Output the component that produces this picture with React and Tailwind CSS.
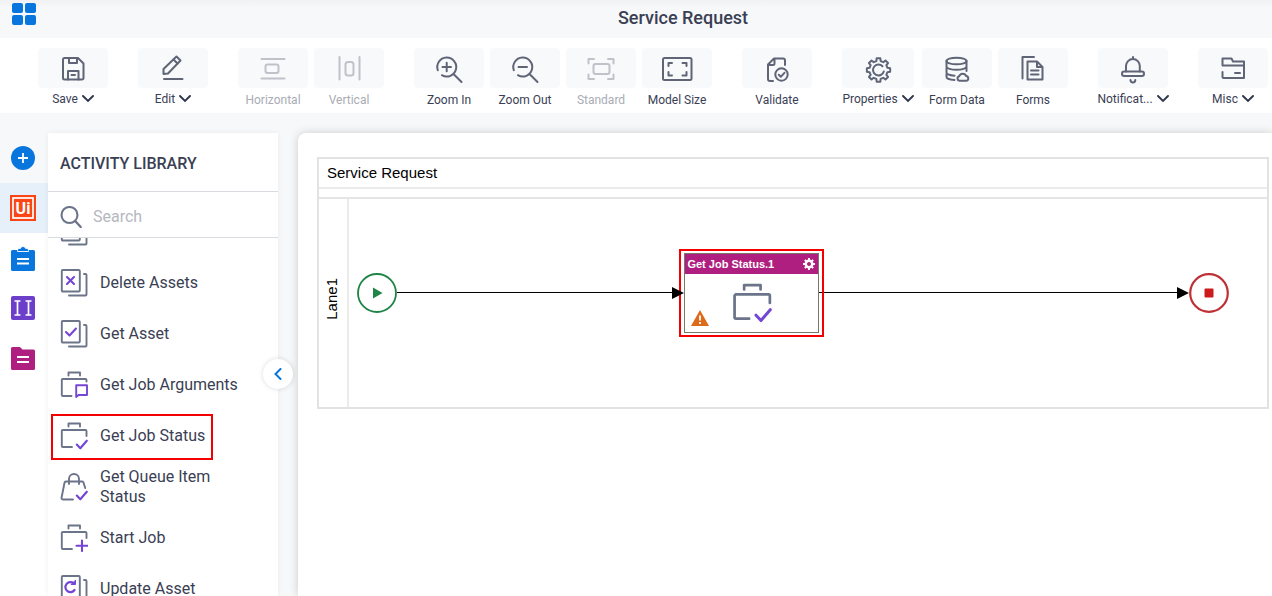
const Icon = ({ children, className = 'size-8' }) => (
  <svg
    viewBox="0 0 32 32"
    fill="none"
    stroke="currentColor"
    strokeWidth="2"
    strokeLinecap="round"
    strokeLinejoin="round"
    className={className}
    aria-hidden="true"
  >
    {children}
  </svg>
);

const gearPath = (cx, cy, outer, inner, teeth) => {
  const points = [];
  const step = (Math.PI * 2) / teeth;
  for (let i = 0; i < teeth; i++) {
    [
      [-0.3, inner],
      [-0.2, outer],
      [0.2, outer],
      [0.3, inner],
    ].forEach(([offset, r]) => {
      const angle = (i + offset) * step;
      points.push(
        `${(cx + r * Math.cos(angle)).toFixed(2)} ${(cy + r * Math.sin(angle)).toFixed(2)}`
      );
    });
  }
  return `M${points.join('L')}Z`;
};

const icons = {
  save: (
    <>
      <path d="M7.5 6H21l5.5 5.5V26a1.5 1.5 0 0 1-1.5 1.5H7.5A1.5 1.5 0 0 1 6 26V7.5A1.5 1.5 0 0 1 7.5 6z" />
      <path d="M12 6v5h8V6M11 27.5V19h10.5v8.5M14.5 23h3.5" />
    </>
  ),
  edit: (
    <>
      <path d="M6.5 22v-5L19.5 4.5l4 4L11 21.5z" />
      <path d="M16.5 7.5l4 4M7 27h18.5" />
    </>
  ),
  horizontal: (
    <>
      <path d="M4.5 7h23M4.5 26.5h23" />
      <rect x="8.5" y="12.5" width="13" height="8.5" rx="2" />
    </>
  ),
  vertical: (
    <>
      <path d="M6.5 5v22.5M26.5 5v22.5" />
      <rect x="12.5" y="10" width="8" height="13.5" rx="2.5" />
    </>
  ),
  zoomIn: (
    <path d="M4.8 18.2A9.5 9.5 0 1 1 8.9 23.2M20.5 22l8 8M9.5 15h8.5M13.7 10.8v8.5" />
  ),
  zoomOut: (
    <path d="M4.8 18.2A9.5 9.5 0 1 1 8.9 23.2M20.5 22l8 8M9.5 15h8.5" />
  ),
  standard: (
    <>
      <path d="M3.5 11.5V7H9M23 7h5.5v4.5M28.5 22.5V27H23M9 27H3.5v-4.5" />
      <rect x="8.5" y="12" width="16" height="10" rx="2" />
    </>
  ),
  modelSize: (
    <>
      <rect x="2" y="6" width="28.5" height="22" rx="1.5" />
      <path d="M7.5 14v-3H11M21.5 11h4v3M25.5 20v3.5h-4M11 23.5H7.5V20" />
    </>
  ),
  validate: (
    <>
      <path d="M12 29H9a2 2 0 0 1-2-2V12.5L13 6.5h9a2 2 0 0 1 2 2V13M7.5 13H12a1.5 1.5 0 0 0 1.5-1.5V7" />
      <circle cx="20.5" cy="22.5" r="6.2" />
      <path d="M17.8 22.8l2 2 3.6-4" />
    </>
  ),
  properties: (
    <>
      <path d={gearPath(16.5, 18, 11.8, 9.2, 8)} />
      <path d="M20.5 14.2a5.5 5.5 0 1 0 1.3 5.3M16.5 12.5a5.5 5.5 0 0 1 2.5 .6" />
    </>
  ),
  formData: (
    <>
      <ellipse cx="15.5" cy="9" rx="10" ry="3.3" />
      <path d="M5.5 9v5.5c0 1.8 4.5 3.3 10 3.3s10-1.5 10-3.3V9M5.5 16v4.5c0 1.5 3.5 2.8 8 3.2M25.5 15v4M5.5 22v3c0 1.4 3.5 2.7 8 3" />
      <path d="M18.5 28.8a2.3 2.3 0 0 1-.3-4.5 3.7 3.7 0 0 1 7-.2 2.4 2.4 0 0 1 .3 4.7z" />
    </>
  ),
  forms: (
    <>
      <path d="M5.5 26.5V5H17" />
      <path d="M10.5 9.5H20l5.5 5.5v12.5h-15zM20 9.5V15h5.5M14 18.5h7.5M14 22.5h7.5" />
    </>
  ),
  bell: (
    <>
      <path d="M9 19.5V14a6.9 6.9 0 0 1 13.8 0v5.5M16 7V5" />
      <rect x="5" y="19.5" width="22" height="4.5" rx="2.2" />
      <path d="M13.5 28a2.4 2.4 0 0 0 4.8 0" />
    </>
  ),
  misc: (
    <>
      <path d="M5.5 13.5v-7h9l1.5 3h11V26H6.5a1 1 0 0 1-1-1v-5M5.5 13.5H27" />
      <path d="M18 21h5" />
    </>
  ),
};

const toolbarGroups = [
  [{ label: 'Save', icon: 'save', menu: true }],
  [{ label: 'Edit', icon: 'edit', menu: true }],
  [
    { label: 'Horizontal', icon: 'horizontal', disabled: true },
    { label: 'Vertical', icon: 'vertical', disabled: true },
  ],
  [
    { label: 'Zoom In', icon: 'zoomIn' },
    { label: 'Zoom Out', icon: 'zoomOut' },
    { label: 'Standard', icon: 'standard', disabled: true },
    { label: 'Model Size', icon: 'modelSize' },
  ],
  [{ label: 'Validate', icon: 'validate' }],
  [
    { label: 'Properties', icon: 'properties', menu: true, wide: true },
    { label: 'Form Data', icon: 'formData' },
    { label: 'Forms', icon: 'forms' },
  ],
  [{ label: 'Notificat...', icon: 'bell', menu: true }],
  [{ label: 'Misc', icon: 'misc', menu: true }],
];

const ToolbarButton = ({ label, icon, menu, disabled, wide }) => (
  <button
    type="button"
    disabled={disabled}
    className={`flex shrink-0 flex-col items-center ${wide ? 'mr-0.5 w-[72px]' : 'w-[70px]'} ${
      disabled ? 'text-[#bfc2c9]' : 'text-[#5f6577]'
    }`}
  >
    <span className="flex h-10 w-full items-center justify-center rounded bg-[#f8f9fb]">
      <Icon>{icons[icon]}</Icon>
    </span>
    <span
      className={`flex items-center gap-1 text-xs whitespace-nowrap ${
        menu ? 'mt-[3px]' : 'mt-1'
      } ${disabled ? 'text-[#a9acb4]' : 'text-[#3a4054]'}`}
    >
      {label}
      {menu && (
        <svg viewBox="0 0 12 8" className="h-2 w-3" fill="none" aria-hidden="true">
          <path d="M1 1l5 5 5-5" stroke="#2f364d" strokeWidth="1.9" strokeLinecap="round" />
        </svg>
      )}
    </span>
  </button>
);

const slate = '#6b7489';
const violet = '#7446d4';

const ActivityIcon = ({ type, className = 'size-7' }) => {
  const isAsset = ['blank', 'delete', 'get', 'update'].includes(type);
  const isJob = ['arguments', 'status', 'start'].includes(type);

  return (
    <svg
      viewBox="0 0 28 28"
      fill="none"
      stroke={slate}
      strokeWidth="1.9"
      strokeLinecap="round"
      strokeLinejoin="round"
      className={`shrink-0 ${className}`}
      aria-hidden="true"
    >
      {isAsset && (
        <>
          <rect x="1.8" y="1" width="18" height="21.5" rx="1" />
          <path d="M24 5h1.5a1 1 0 0 1 1 1v19.5a1 1 0 0 1-1 1H9" />
        </>
      )}
      {isJob && (
        <>
          <path d="M8.5 4.5v-3H20v3" />
          <path
            d={
              type === 'arguments'
                ? 'M26.5 10.5V9a1 1 0 0 0-1-1H2.8a1 1 0 0 0-1 1v15a1 1 0 0 0 1 1h8.700'
                : 'M26.5 14V9a1 1 0 0 0-1-1H2.8a1 1 0 0 0-1 1v15a1 1 0 0 0 1 1H12'
            }
          />
        </>
      )}
      {type === 'queue' && (
        <path d="M9 11V6a5 5 0 0 1 10 0v5M25.2 15l-1.700-5.500a1.5 1.5 0 0 0-1.3-1H6a1.5 1.5 0 0 0-1.5 1.2L1.5 25A1.5 1.5 0 0 0 3 26.5h10" />
      )}
      <g stroke={violet}>
        {type === 'delete' && (
          <path d="M7 8l7 7M14 8l-7 7" strokeWidth="2.1" />
        )}
        {type === 'get' && <path d="M6 12l3.5 3.5 6.5-7" strokeWidth="2.1" />}
        {type === 'update' && (
          <>
            <path d="M14.5 15a5 5 0 1 1-1-6.8" strokeWidth="2.2" />
            <path d="M11.5 9.5h4v-4z" fill={violet} strokeWidth="1" />
          </>
        )}
        {type === 'arguments' && (
          <path d="M16.2 14.3H27V24h-8.5l-2.3 2z" />
        )}
        {(type === 'status' || type === 'queue') && (
          <path d="M16.8 22.5l3.5 3.8 6.5-7.6" strokeWidth="2.1" />
        )}
        {type === 'start' && (
          <path d="M22 16.5V27M16.5 21.8h11" strokeWidth="2.1" />
        )}
      </g>
    </svg>
  );
};

const activities = [
  { type: 'blank', name: '' },
  { type: 'delete', name: 'Delete Assets' },
  { type: 'get', name: 'Get Asset' },
  { type: 'arguments', name: 'Get Job Arguments' },
  { type: 'status', name: 'Get Job Status', highlighted: true },
  { type: 'queue', name: 'Get Queue Item Status' },
  { type: 'start', name: 'Start Job' },
  { type: 'update', name: 'Update Asset' },
];

const railItems = [
  {
    id: 'add',
    className: '',
    icon: (
      <>
        <circle cx="13" cy="13" r="12" fill="#0876dc" />
        <path d="M13 8v10M8 13h10" stroke="#fff" strokeWidth="1.8" />
      </>
    ),
  },
  {
    id: 'uipath',
    className: 'bg-[#e5f0fa]',
    icon: (
      <>
        <rect width="26" height="26" fill="#fa4616" />
        <rect x="3" y="3" width="20" height="20" fill="none" stroke="#fff" strokeWidth="1.7" />
        <text
          x="13"
          y="19"
          textAnchor="middle"
          fill="#fff"
          className="font-['Roboto',sans-serif] text-base font-bold"
        >
          Ui
        </text>
      </>
    ),
  },
  {
    id: 'tasks',
    className: 'bg-white',
    icon: (
      <>
        <path
          d="M2.5 5H23.500A1.5 1.5 0 0 1 25 6.500V24.500A1.5 1.5 0 0 1 23.500 26h-21A1.5 1.5 0 0 1 1 24.500v-18A1.5 1.5 0 0 1 2.500 5z"
          fill="#0876dc"
        />
        <path
          d="M7.500 6.500V5.200c0-1 .8-1.700 1.800-1.700h1a2.800 2.800 0 0 1 5.400 0h1c1 0 1.800.7 1.800 1.700v1.300z"
          fill="#0876dc"
          stroke="#fff"
          strokeWidth="0.9"
        />
        <path d="M7 14h12M7 18.500h12" stroke="#fff" strokeWidth="2" />
      </>
    ),
  },
  {
    id: 'variables',
    className: 'bg-white',
    icon: (
      <>
        <rect x="1" y="1" width="24" height="24" rx="2" fill="#6c3fcb" />
        <path
          d="M7.5 6v14M18.5 6v14M4.5 6h6M4.5 20h6M15.5 6h6M15.5 20h6"
          stroke="#fff"
          strokeWidth="1.7"
        />
      </>
    ),
  },
  {
    id: 'files',
    className: 'bg-white',
    icon: (
      <>
        <path
          d="M2.5 2H10l2.5 2.5h11A1.5 1.5 0 0 1 25 6v17.5a1.5 1.5 0 0 1-1.5 1.5h-21A1.5 1.5 0 0 1 1 23.5v-20A1.5 1.5 0 0 1 2.5 2z"
          fill="#ae1f80"
        />
        <path d="M7 12h12M7 17h12" stroke="#fff" strokeWidth="2" />
      </>
    ),
  },
];

const Connector = ({ className }) => (
  <div className={`flex items-center ${className}`}>
    <div className="h-px flex-1 bg-black" />
    <svg viewBox="0 0 12 12" className="z-10 -ml-px size-3" aria-hidden="true">
      <path d="M0 0l12 6-12 6z" />
    </svg>
  </div>
);

function Sidebar() {
  return (
    <aside className="relative flex w-[230px] shrink-0 flex-col bg-white shadow-[0_0_6px_rgba(0,0,0,0.06)]">
      <h2 className="flex h-[59px] shrink-0 items-center border-b border-[#d9dbe0] px-3 pt-1 text-base font-medium text-[#3a4054]">
        ACTIVITY LIBRARY
      </h2>
      <label className="flex h-[46px] shrink-0 items-center gap-[11px] border-b border-[#d9dbe0] px-3 pt-1">
        <svg viewBox="0 0 22 22" className="size-[22px] shrink-0" fill="none" aria-hidden="true">
          <circle cx="9.5" cy="9" r="8" stroke={slate} strokeWidth="2.1" />
          <path d="M15.2 15l5.5 6" stroke={slate} strokeWidth="2.3" strokeLinecap="round" />
        </svg>
        <input
          type="text"
          placeholder="Search"
          className="w-full min-w-0 bg-transparent text-base text-[#3a4054] outline-none placeholder:text-[#b5b8bf]"
        />
      </label>
      <div className="min-h-0 flex-1 overflow-hidden">
        <ul className="-mt-8">
          {activities.map((activity) => (
            <li key={activity.type} className="flex h-[51px] px-3">
              <button
                type="button"
                className="relative flex items-center gap-3 text-left text-base leading-5 text-[#3a4054]"
              >
                <ActivityIcon type={activity.type} />
                <span className="max-w-[150px]">{activity.name}</span>
                {activity.highlighted && (
                  <span className="absolute top-1 -right-2 bottom-px -left-[9px] border-2 border-[#f40000]" />
                )}
              </button>
            </li>
          ))}
        </ul>
      </div>
      <button
        type="button"
        className="absolute top-[226px] -right-[15px] z-10 flex size-[30px] items-center justify-center rounded-full bg-white shadow-[0_0_5px_rgba(0,0,0,0.15)]"
      >
        <svg viewBox="0 0 8 12" className="h-3 w-2" fill="none" aria-hidden="true">
          <path d="M6.5 1l-5 5 5 5" stroke="#0876dc" strokeWidth="2" strokeLinecap="round" />
        </svg>
      </button>
    </aside>
  );
}

function ActivityNode() {
  return (
    <div className="relative flex h-20 w-[135px] shrink-0 flex-col border border-[#77776a] bg-white">
      <div className="flex h-5 items-center justify-between bg-[#ae1f80] pt-px pr-[3px] pl-0.5 text-[11px] font-bold text-white">
        Get Job Status.1
        <svg viewBox="0 0 12 12" className="size-3" aria-hidden="true">
          <path
            d={`${gearPath(6, 6, 6, 4.5, 8)}M6 4a2 2 0 1 0 0 4 2 2 0 0 0 0-4z`}
            fill="#fff"
            fillRule="evenodd"
          />
        </svg>
      </div>
      <div className="relative flex flex-1 justify-center pt-[9px]">
        <ActivityIcon type="status" className="size-10" />
        <svg viewBox="0 0 18 16" className="absolute bottom-1.5 left-1.5 h-4 w-[18px]" aria-hidden="true">
          <path d="M9 0l9 16H0z" fill="#dd6b1a" />
          <path d="M9 5.5v5M9 12v2" stroke="#fff" strokeWidth="1.8" />
        </svg>
      </div>
      <span className="absolute -inset-x-1.5 -inset-y-[5px] border-2 border-[#f40000]" />
    </div>
  );
}

function ProcessCanvas() {
  return (
    <main className="min-w-0 flex-1 rounded-tl-lg bg-white pt-6 pr-[3px] pl-[19px] shadow-[0_0_10px_rgba(0,0,0,0.18)]">
      <section className="border-2 border-[#e2e2e2] font-['Liberation_Sans',Arial,sans-serif] text-[15px] text-black">
        <h3 className="h-[30px] border-b-2 border-[#ebebeb] px-2 leading-7">
          Service Request
        </h3>
        <div className="mt-2 flex h-[210px] border-t-2 border-[#e5e5e5]">
          <div className="flex w-[30px] items-center justify-center border-r-2 border-[#ebebeb] pr-0.5 pb-2">
            <span className="rotate-180 [writing-mode:vertical-rl]">Lane1</span>
          </div>
          <div className="flex flex-1 items-center pr-[38px] pb-[21px] pl-2">
            <svg viewBox="0 0 40 40" className="size-10 shrink-0" aria-hidden="true">
              <circle cx="20" cy="20" r="19" fill="#fff" stroke="#1f8446" strokeWidth="1.8" />
              <path d="M16 14.5l9.5 5.5-9.5 5.5z" fill="#1f8446" />
            </svg>
            <Connector className="flex-[7]" />
            <ActivityNode />
            <Connector className="flex-[9]" />
            <svg viewBox="0 0 40 40" className="size-10 shrink-0" aria-hidden="true">
              <circle cx="20" cy="20" r="18.8" fill="#fff" stroke="#bf3036" strokeWidth="2.2" />
              <rect x="15.5" y="15.5" width="9" height="9" rx="1" fill="#cc1b1b" />
            </svg>
          </div>
        </div>
      </section>
    </main>
  );
}

function App() {
  return (
    <div className="flex h-screen flex-col overflow-hidden bg-[#f7f8fa] font-['Roboto',sans-serif]">
      <header className="flex h-[38px] shrink-0 bg-linear-to-b from-[#f0f1f3] to-[#f7f8fa] to-20%">
        <div className="w-[94px] shrink-0 px-3 pt-[3px]">
          <button type="button" className="grid grid-cols-2 gap-0.5">
            <span className="h-2.5 w-[11px] rounded-xs bg-[#0876dc]" />
            <span className="h-2.5 w-[11px] rounded-xs bg-[#0876dc]" />
            <span className="h-2.5 w-[11px] rounded-xs bg-[#0876dc]" />
            <span className="h-2.5 w-[11px] rounded-xs bg-[#0876dc]" />
          </button>
        </div>
        <h1 className="flex-1 text-center text-lg leading-9 font-medium text-[#3a4054]">
          Service Request
        </h1>
      </header>

      <div className="flex h-[75px] shrink-0 gap-[30px] overflow-hidden bg-white pt-2.5 pl-[38px]">
        {toolbarGroups.map((group) => (
          <div key={group[0].label} className="flex shrink-0 gap-1.5">
            {group.map((item) => (
              <ToolbarButton key={item.label} {...item} />
            ))}
          </div>
        ))}
      </div>

      <div className="flex min-h-0 flex-1 pt-5">
        <nav className="flex w-12 shrink-0 flex-col">
          {railItems.map((item) => (
            <button
              key={item.id}
              type="button"
              className={`flex h-[50px] shrink-0 items-center justify-center pr-0.5 ${item.className}`}
            >
              <svg viewBox="0 0 26 26" className="size-[26px]" fill="none" aria-hidden="true">
                {item.icon}
              </svg>
            </button>
          ))}
          <div className="flex-1 bg-white" />
        </nav>
        <Sidebar />
        <div className="w-5 shrink-0" />
        <ProcessCanvas />
      </div>
    </div>
  );
}

export default App;
